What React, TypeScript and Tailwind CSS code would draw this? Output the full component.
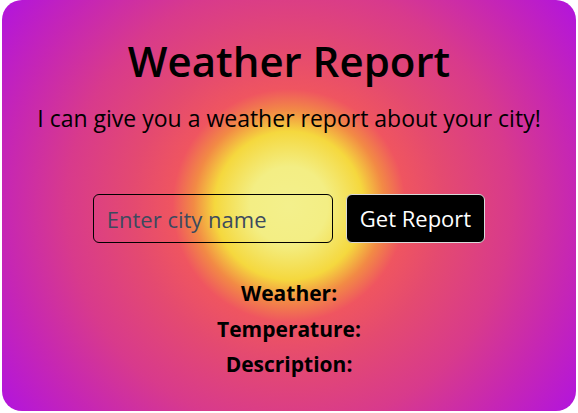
export default function App() {
  return (
    <div className="w-[578px] h-[413px] bg-white" style={{ fontFamily: '"Open Sans", "Noto Sans", sans-serif' }}>
      <div className="ml-[2px] w-[574px] h-[411px] rounded-[20px] flex flex-col items-center text-black bg-[radial-gradient(circle_at_50%_50%,#f3f08c_0%,#f3ee84_11%,#f5d83e_21%,#f28a45_27%,#ef5560_33%,#e44a70_44%,#d83a8c_63%,#c626b4_81%,#b214de_100%)]">
        <h1 className="mt-[31px] text-[42px] leading-[60px] font-semibold">Weather Report</h1>
        <p className="mt-[12px] text-[23px] leading-[30px]">I can give you a weather report about your city!</p>
        <div className="mt-[61px] flex gap-[13px]">
          <input
            type="text"
            placeholder="Enter city name"
            className="w-[240px] h-[49px] px-[13px] rounded-[6px] border border-black bg-transparent text-[22px] placeholder:text-[#3c4a5e] outline-none"
          />
          <button className="h-[49px] px-[13px] rounded-[6px] border border-[#d9d9d9] bg-black text-white text-[22px]">
            Get Report
          </button>
        </div>
        <div className="mt-[33px] flex flex-col items-center font-bold text-[21px] leading-[35.5px]">
          <p>Weather:</p>
          <p>Temperature:</p>
          <p>Description:</p>
        </div>
      </div>
    </div>
  );
}
